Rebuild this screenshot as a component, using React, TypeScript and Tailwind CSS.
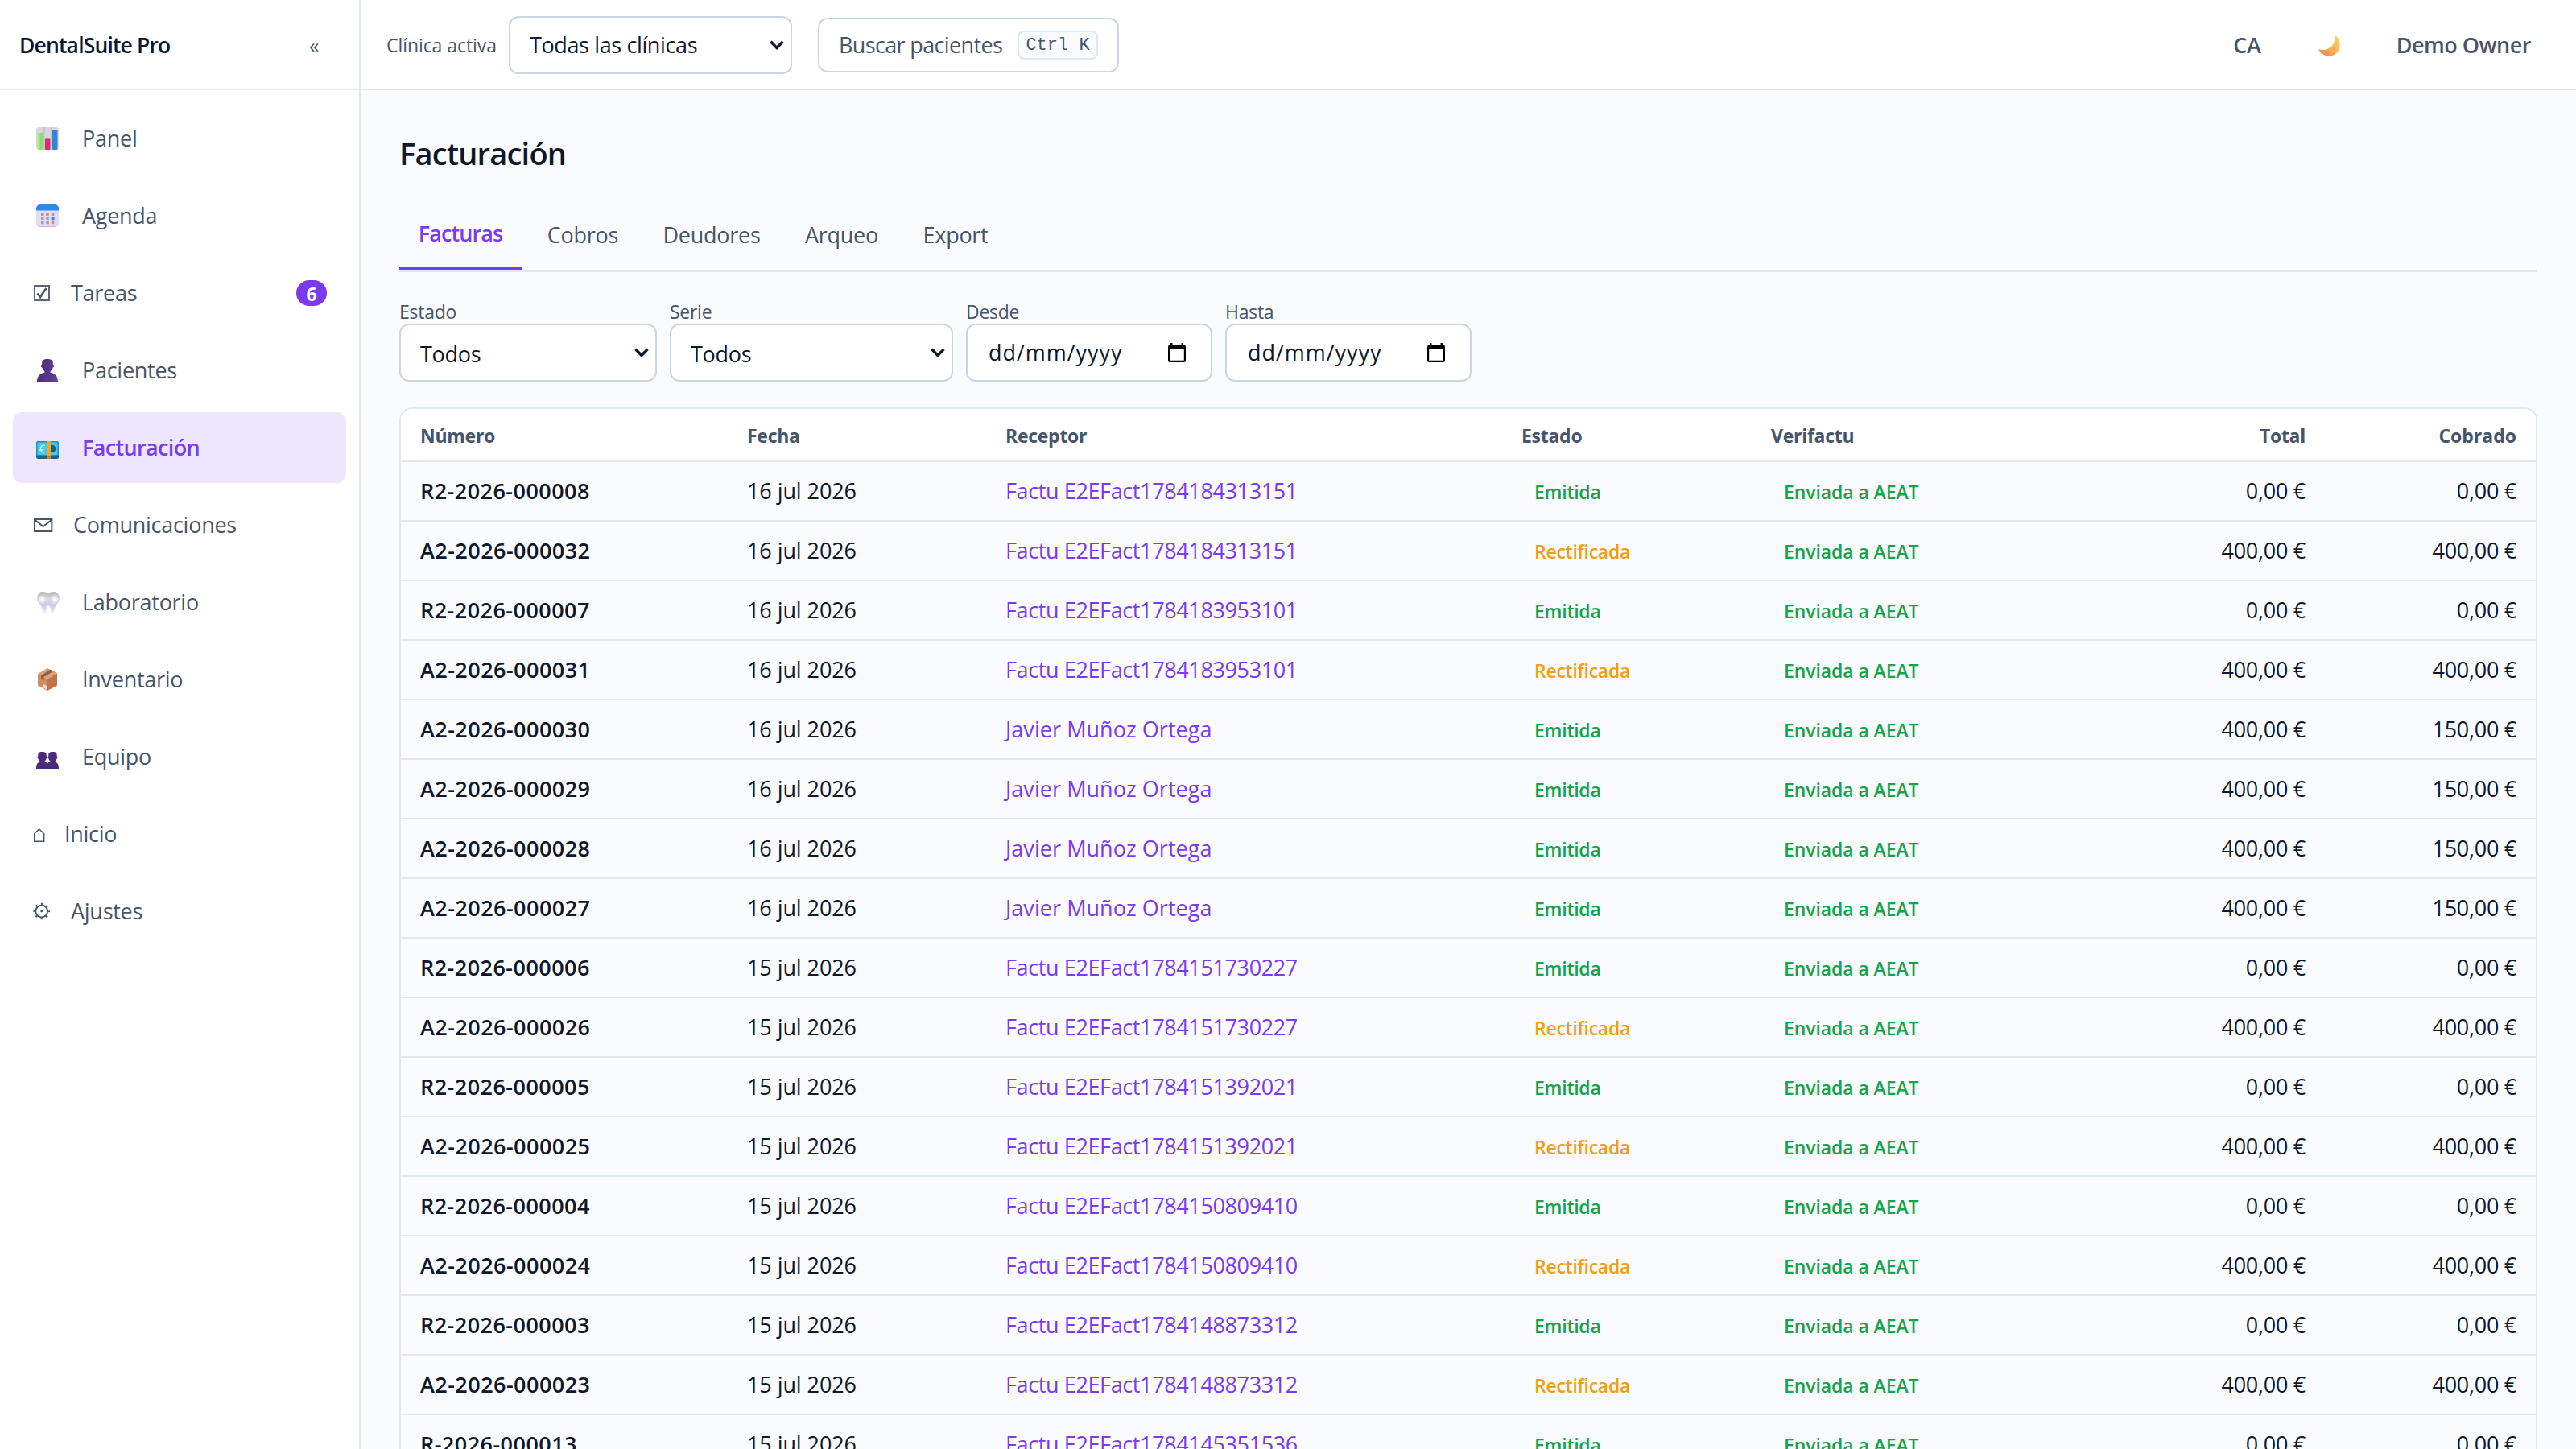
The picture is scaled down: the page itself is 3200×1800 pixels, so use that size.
import React from 'react';

interface NavItem {
  label: string;
  icon: React.ReactNode;
  badge?: number;
  active?: boolean;
}

interface Invoice {
  numero: string;
  fecha: string;
  receptor: string;
  rectificada?: boolean;
  total: string;
  cobrado: string;
}

const ChartIcon = () => (
  <svg viewBox="0 0 28 28" className="w-7 h-7">
    <rect width="28" height="28" rx="4" fill="#d9d3de" />
    <path d="M0 8.500h28M0 18.500h28M10 0v28M19 0v28" stroke="#b9b2c2" strokeWidth="1" />
    <rect x="2" y="7" width="7" height="21" rx="1" fill="#86e06c" />
    <rect x="2" y="7" width="2.500" height="21" rx="1" fill="#a9f07d" />
    <rect x="11" y="14.500" width="6.500" height="13.500" rx="1" fill="#d92a6b" />
    <rect x="20" y="3" width="6.500" height="25" rx="1" fill="#2f86d3" />
  </svg>
);

const CalendarIcon = () => (
  <svg viewBox="0 0 28 28" className="w-7 h-7">
    <rect y="1" width="28" height="27" rx="5" fill="#d3b0ee" />
    <rect y="1" width="28" height="26" rx="5" fill="#e6dcf0" />
    <path d="M0 7.500V5a5 5 0 0 1 5-5h18a5 5 0 0 1 5 5v2.500z" fill="#2b8af0" />
    <g fill="#a59ab0">
      <path d="M6 10.500h3.500V14H6zM12.300 10.500h3.500V14h-3.500zM18.800 10.500h3.500V14h-3.500z" />
      <path d="M6 15.500h3.500V19H6zM12.300 15.500h3.500V19h-3.500z" />
      <path d="M6 21h3.500v3.200H6zM12.300 21h3.500v3.200h-3.500zM18.800 21h3.500v3.200h-3.500z" />
    </g>
    <path d="M18.600 15.300h4v4h-4z" fill="#2b8af0" />
  </svg>
);

const PersonIcon = () => (
  <svg viewBox="0 0 28 28" className="w-7 h-7">
    <defs>
      <linearGradient id="person" x1="0" y1="0" x2="1" y2="0.3">
        <stop offset="0" stopColor="#46276f" />
        <stop offset="1" stopColor="#5f3f99" />
      </linearGradient>
    </defs>
    <path
      d="M14 0c4.200 0 6.600 1 6.800 4.500v2.300c1.500 0 1.600 3.700-.2 4-.6 2.200-1.600 3.300-3 4.400v1.600c5 .8 9 3.600 9.400 11.200H1c.4-7.600 4.500-10.400 9.400-11.200v-1.600c-1.400-1.100-2.400-2.200-3-4.400-1.800-.3-1.700-4-.2-4V4.500C7.400 1 9.800 0 14 0z"
      fill="url(#person)"
    />
  </svg>
);

const MoneyIcon = () => (
  <svg viewBox="0 0 28 22" className="w-7 h-[22px] relative top-[3px]">
    <rect y="3" width="28" height="19" rx="2.500" fill="#1a6587" />
    <rect width="28" height="18.500" rx="2" fill="#1e8fb5" />
    <rect x="1.500" y="1.500" width="25" height="15.500" rx="1" fill="#45c8ee" />
    <circle cx="19.500" cy="9.500" r="4.800" fill="#175f82" />
    <path d="M11 5.500c-3.200-1.200-5.500.8-5.500 4s2.300 5.300 5.500 4M4 8.300h6M4 10.800h5.500" fill="none" stroke="#d9f7ff" strokeWidth="1.300" />
    <path d="M13.200 0h4.800v22h-4.800z" fill="#f6a81c" />
    <path d="M13.200 18h4.800v4h-4.800z" fill="#d98014" />
  </svg>
);

const ToothIcon = () => (
  <svg viewBox="0 0 28 22" preserveAspectRatio="none" className="w-7 h-[26px] relative top-px left-px">
    <defs>
      <linearGradient id="tooth" x1="0" y1="0" x2="0" y2="1">
        <stop offset="0" stopColor="#b9b6bc" />
        <stop offset="0.300" stopColor="#dad8dc" />
        <stop offset="0.600" stopColor="#d6c6ea" />
        <stop offset="1" stopColor="#f1e9f8" />
      </linearGradient>
      <radialGradient id="shine">
        <stop offset="0" stopColor="#fff" />
        <stop offset="1" stopColor="#fff" stopOpacity="0" />
      </radialGradient>
    </defs>
    <path
      d="M0 6C0 2 3 0 7 0c3 0 4.500 1 7 1s4-1 7-1c4 0 7 2 7 6 0 4-2.500 5.500-4.500 7.200-1 1.700-1.500 7-4.500 8.300-2-.5-2-5-3.500-7.200-.6-.8-2-.8-2.600 0C11.500 16 12 20.500 9.500 21.800 6.500 20.500 6 15.500 4.500 13 2.500 11.200 0 10 0 6z"
      fill="url(#tooth)"
    />
    <circle cx="22" cy="7" r="5.500" fill="url(#shine)" />
    <circle cx="6.500" cy="7" r="5.500" fill="url(#shine)" />
  </svg>
);

const BoxIcon = () => (
  <svg viewBox="0 0 28 28" className="w-7 h-7">
    <path d="M14 0l12 6-12 7.500L2 7z" fill="#dba070" />
    <path d="M2 7l12 6.500V28L2 21.500z" fill="#d08d5c" />
    <path d="M26 6v15.500L14 28V13.500z" fill="#bd7547" />
    <path d="M17.500 1.800l4 2L9.500 11v4.500l-3.500-2V9.200z" fill="#8d5f42" />
    <path d="M9 20l4 2v4.500l-4-2.200z" fill="#ecdcd2" />
  </svg>
);

const TeamIcon = () => (
  <svg viewBox="0 0 28 21" className="w-7 h-[21px] relative top-1">
    <path
      d="M7.500 0c4 0 5.200 1.200 5.200 4v1.500c1.200.2 1 2.700-.2 3-.5 1.800-1.300 2.700-2 3.300v1c2 .4 3 .8 3.500 1.300.5-.5 1.500-.9 3.500-1.300v-1c-.7-.6-1.500-1.500-2-3.300-1.200-.3-1.400-2.800-.2-3V4c0-2.800 1.200-4 5.200-4s5.200 1.200 5.200 4v1.500c1.200.2 1 2.700-.2 3-.5 1.800-1.300 2.700-2 3.300v1c3 .5 4.500 2.500 4.500 8.200H0c0-5.700 1.500-7.700 4.500-8.200v-1c-.7-.6-1.500-1.500-2-3.300-1.200-.3-1.400-2.800-.2-3V4c0-2.800 1.200-4 5.200-4z"
      fill="#4b2a7b"
    />
  </svg>
);

const CheckIcon = () => (
  <svg viewBox="0 0 24 24" className="w-6 h-6">
    <rect x="3" y="3" width="18" height="18" fill="none" stroke="#475569" strokeWidth="1.800" />
    <path d="M6.500 12.500l3.500 4.500L17.500 6" fill="none" stroke="#475569" strokeWidth="2.600" />
  </svg>
);

const MailIcon = () => (
  <svg viewBox="0 0 27 24" className="w-[27px] h-6">
    <path d="M3 5h21.400v15H3zM3 5.500l10.700 8.500L24.400 5.500" fill="none" stroke="#475569" strokeWidth="2" />
  </svg>
);

const HomeIcon = () => (
  <svg viewBox="0 0 16 24" className="w-4 h-6">
    <path d="M2.700 21.300V11.500l6-5.500 6 5.500v9.800z" fill="none" stroke="#475569" strokeWidth="1.400" />
  </svg>
);

const GearIcon = () => (
  <svg viewBox="0 0 24 24" className="w-6 h-6">
    <g fill="none" stroke="#475569">
      <circle cx="11.700" cy="12" r="7.400" strokeWidth="1.900" />
      <circle cx="11.700" cy="12" r="9.200" strokeWidth="2.200" strokeDasharray="2.200 5.025" strokeDashoffset="1.100" />
    </g>
    <circle cx="11.700" cy="12" r="1.400" fill="#475569" />
  </svg>
);

const MoonIcon = () => (
  <svg viewBox="0 0 27 26" className="w-[27px] h-[26px]">
    <defs>
      <linearGradient id="moon" x1="1" y1="0" x2="0.400" y2="1">
        <stop offset="0" stopColor="#fbcf62" />
        <stop offset="0.600" stopColor="#f9bd5a" />
        <stop offset="1" stopColor="#ee8f4c" />
      </linearGradient>
    </defs>
    <path d="M20.500 0c4 2.500 6.500 7 6.300 12C26.500 20 20.500 25.800 12.500 25.500 7 25.300 2.500 22 0 17c7 2.500 13 .5 17.200-4.500C20 9 21 4.500 20.500 0z" fill="url(#moon)" />
    <circle cx="19.500" cy="16" r="2" fill="#efa84e" />
    <circle cx="12" cy="20.500" r="1.500" fill="#efa04e" />
  </svg>
);

const Chevron = () => (
  <svg viewBox="0 0 18 12" className="w-[18px] h-3 shrink-0">
    <path d="M1.500 1.800L9 9.500l7.500-7.700" fill="none" stroke="#0f172a" strokeWidth="3.400" />
  </svg>
);

const DateIcon = () => (
  <svg viewBox="0 0 22 24" className="w-[22px] h-6 shrink-0">
    <path d="M3 0h2.500v2.500h11V0H19v2.500h.5A2.500 2.500 0 0 1 22 5v16.500a2.500 2.500 0 0 1-2.500 2.500h-17A2.500 2.500 0 0 1 0 21.500V5a2.500 2.500 0 0 1 2.500-2.500H3zM2.200 7.800v13.900h17.600V7.800z" fill="#000" />
  </svg>
);

const navItems: NavItem[] = [
  { label: 'Panel', icon: <ChartIcon /> },
  { label: 'Agenda', icon: <CalendarIcon /> },
  { label: 'Tareas', icon: <CheckIcon />, badge: 6 },
  { label: 'Pacientes', icon: <PersonIcon /> },
  { label: 'Facturación', icon: <MoneyIcon />, active: true },
  { label: 'Comunicaciones', icon: <MailIcon /> },
  { label: 'Laboratorio', icon: <ToothIcon /> },
  { label: 'Inventario', icon: <BoxIcon /> },
  { label: 'Equipo', icon: <TeamIcon /> },
  { label: 'Inicio', icon: <HomeIcon /> },
  { label: 'Ajustes', icon: <GearIcon /> },
];

// The plain glyph icons sit at the item's edge, the emoji ones are boxed wider
const glyphItems = ['Tareas', 'Comunicaciones', 'Inicio', 'Ajustes'];

const tabs = [
  { label: 'Facturas', width: 'w-[152px]' },
  { label: 'Cobros', width: 'w-[136px]' },
  { label: 'Deudores', width: 'w-[168px]' },
  { label: 'Arqueo', width: 'w-[139px]' },
  { label: 'Export', width: 'w-[128px]' },
];

const invoices: Invoice[] = [
  { numero: 'R2-2026-000008', fecha: '16 jul 2026', receptor: 'Factu E2EFact1784184313151', total: '0,00 €', cobrado: '0,00 €' },
  { numero: 'A2-2026-000032', fecha: '16 jul 2026', receptor: 'Factu E2EFact1784184313151', rectificada: true, total: '400,00 €', cobrado: '400,00 €' },
  { numero: 'R2-2026-000007', fecha: '16 jul 2026', receptor: 'Factu E2EFact1784183953101', total: '0,00 €', cobrado: '0,00 €' },
  { numero: 'A2-2026-000031', fecha: '16 jul 2026', receptor: 'Factu E2EFact1784183953101', rectificada: true, total: '400,00 €', cobrado: '400,00 €' },
  { numero: 'A2-2026-000030', fecha: '16 jul 2026', receptor: 'Javier Muñoz Ortega', total: '400,00 €', cobrado: '150,00 €' },
  { numero: 'A2-2026-000029', fecha: '16 jul 2026', receptor: 'Javier Muñoz Ortega', total: '400,00 €', cobrado: '150,00 €' },
  { numero: 'A2-2026-000028', fecha: '16 jul 2026', receptor: 'Javier Muñoz Ortega', total: '400,00 €', cobrado: '150,00 €' },
  { numero: 'A2-2026-000027', fecha: '16 jul 2026', receptor: 'Javier Muñoz Ortega', total: '400,00 €', cobrado: '150,00 €' },
  { numero: 'R2-2026-000006', fecha: '15 jul 2026', receptor: 'Factu E2EFact1784151730227', total: '0,00 €', cobrado: '0,00 €' },
  { numero: 'A2-2026-000026', fecha: '15 jul 2026', receptor: 'Factu E2EFact1784151730227', rectificada: true, total: '400,00 €', cobrado: '400,00 €' },
  { numero: 'R2-2026-000005', fecha: '15 jul 2026', receptor: 'Factu E2EFact1784151392021', total: '0,00 €', cobrado: '0,00 €' },
  { numero: 'A2-2026-000025', fecha: '15 jul 2026', receptor: 'Factu E2EFact1784151392021', rectificada: true, total: '400,00 €', cobrado: '400,00 €' },
  { numero: 'R2-2026-000004', fecha: '15 jul 2026', receptor: 'Factu E2EFact1784150809410', total: '0,00 €', cobrado: '0,00 €' },
  { numero: 'A2-2026-000024', fecha: '15 jul 2026', receptor: 'Factu E2EFact1784150809410', rectificada: true, total: '400,00 €', cobrado: '400,00 €' },
  { numero: 'R2-2026-000003', fecha: '15 jul 2026', receptor: 'Factu E2EFact1784148873312', total: '0,00 €', cobrado: '0,00 €' },
  { numero: 'A2-2026-000023', fecha: '15 jul 2026', receptor: 'Factu E2EFact1784148873312', rectificada: true, total: '400,00 €', cobrado: '400,00 €' },
  { numero: 'R-2026-000013', fecha: '15 jul 2026', receptor: 'Factu E2EFact1784145351536', total: '0,00 €', cobrado: '0,00 €' },
];

const Sidebar: React.FC = () => (
  <aside className="w-[448px] shrink-0 bg-white border-r-2 border-[#e2e8f0]">
    <div className="h-28 border-b-2 border-[#e2e8f0] flex items-center justify-between pl-6 pr-[50px]">
      <span className="pt-px text-[26.5px] font-semibold text-[#0f172a] tracking-[-0.032em]">DentalSuite Pro</span>
      <span className="pt-0.5 text-[25px] text-[#475569]">«</span>
    </div>
    <nav className="p-4 flex flex-col gap-2">
      {navItems.map(item => (
        <a
          key={item.label}
          className={`h-[88px] w-[414px] px-6 flex items-center gap-6 rounded-xl ${
            item.active ? 'bg-[#eee6fe] text-[#7c3aed] font-semibold tracking-[-0.024em]' : 'text-[#475569]'
          }`}
        >
          <span className={`shrink-0 flex ${glyphItems.includes(item.label) ? '' : 'w-[38px] pl-[5px]'}`}>{item.icon}</span>
          <span className="flex-1">{item.label}</span>
          {item.badge && (
            <span className="w-[38px] h-8 rounded-full bg-[#7c3aed] text-white text-[23px] font-bold flex items-center justify-center pt-0.5">
              {item.badge}
            </span>
          )}
        </a>
      ))}
    </nav>
  </aside>
);

const TopBar: React.FC = () => (
  <header className="h-28 shrink-0 bg-white border-b-2 border-[#e2e8f0] flex items-center pl-8">
    <span className="w-[136px] pt-0.5 text-[23px] text-[#475569] tracking-[-0.003em]">Clínica activa</span>
    <div className="ml-4 w-[352px] h-[72px] rounded-xl border-2 border-[#cbd5e1] flex items-center justify-between pl-6 pr-2 text-[#0f172a] tracking-[-0.014em] mt-0.5">
      <span>Todas las clínicas</span>
      <Chevron />
    </div>
    <div className="ml-8 w-[374px] h-[68px] mt-0.5 rounded-xl border-2 border-[#cbd5e1] flex items-center justify-between px-6 text-[#475569] tracking-[-0.024em]">
      <span>Buscar pacientes</span>
      <kbd className="w-[100px] h-9 pt-0.5 rounded-lg border-2 border-[#e2e8f0] bg-[#fafbfd] flex items-center justify-center whitespace-pre font-['Liberation_Mono',monospace] text-[22px] tracking-normal">
        Ctrl K
      </kbd>
    </div>
    <div className="ml-auto flex items-center pr-14 pt-0.5 text-[#475569] font-semibold">
      <span>CA</span>
      <span className="ml-[71px] mt-0.5"><MoonIcon /></span>
      <span className="ml-[70px] tracking-[-0.018em]">Demo Owner</span>
    </div>
  </header>
);

const SelectField = ({ label, width }: { label: string; width: string }) => (
  <label className={`flex flex-col ${width}`}>
    <span className="h-8 leading-[34px] text-[23px] text-[#475569]">{label}</span>
    <span className="h-[72px] rounded-xl border-2 border-[#cbd5e1] bg-white flex items-center justify-between pl-6 pr-2 text-[#0f172a]">
      <span className="pt-[3px]">Todos</span>
      <Chevron />
    </span>
  </label>
);

const DateField = ({ label }: { label: string }) => (
  <label className="flex flex-col w-[306px]">
    <span className="h-8 leading-[34px] text-[23px] text-[#475569]">{label}</span>
    <span className="h-[72px] rounded-xl border-2 border-[#cbd5e1] bg-white flex items-center justify-between pl-[26px] pr-[31px] text-[#0f172a]">
      <span className="tracking-[0.035em]">dd/mm/yyyy</span>
      <DateIcon />
    </span>
  </label>
);

const InvoiceTable: React.FC = () => (
  <div className="mt-8 rounded-t-2xl border-2 border-b-0 border-[#e2e8f0] overflow-hidden">
    <table className="w-full table-fixed border-separate border-spacing-0">
      <colgroup>
        <col className="w-[406px]" />
        <col className="w-[321px]" />
        <col className="w-[641px]" />
        <col className="w-[310px]" />
        <col className="w-[450px]" />
        <col className="w-[262px]" />
        <col className="w-[262px]" />
      </colgroup>
      <thead>
        <tr className="h-[66px] bg-white text-left text-[23px] text-[#475569] *:border-b-2 *:border-[#e2e8f0] *:px-6 *:pt-0.5 *:pb-0 *:font-bold">
          <th>Número</th>
          <th>Fecha</th>
          <th>Receptor</th>
          <th>Estado</th>
          <th>Verifactu</th>
          <th className="text-right">Total</th>
          <th className="text-right tracking-normal">Cobrado</th>
        </tr>
      </thead>
      <tbody>
        {invoices.map(inv => (
          <tr key={inv.numero} className="h-[74px] text-[#0f172a] *:border-b-2 *:border-[#e2e8f0] *:px-6 *:py-0">
            <td className="font-semibold tracking-[0.017em]">{inv.numero}</td>
            <td className="tracking-[-0.003em]">{inv.fecha}</td>
            <td className={`text-[#7c3aed] ${inv.receptor.startsWith('Factu') ? 'tracking-[-0.014em]' : 'tracking-[0.002em]'}`}>
              {inv.receptor}
            </td>
            <td>
              <span className={`px-4 text-[23px] font-semibold ${inv.rectificada ? 'text-[#f59e0b]' : 'text-[#16a34a]'}`}>
                {inv.rectificada ? 'Rectificada' : 'Emitida'}
              </span>
            </td>
            <td>
              <span className="px-4 text-[23px] font-semibold text-[#16a34a] tracking-[-0.004em]">Enviada a AEAT</span>
            </td>
            <td className="text-right">{inv.total}</td>
            <td className="text-right">{inv.cobrado}</td>
          </tr>
        ))}
      </tbody>
    </table>
  </div>
);

const App: React.FC = () => {
  return (
    <div className="w-[3200px] h-[1800px] overflow-hidden flex bg-[#fafbfd] font-['Open_Sans',sans-serif] text-[27px] leading-[36px] tracking-[-0.01em] whitespace-nowrap">
      <Sidebar />
      <div className="flex-1 flex flex-col">
        <TopBar />
        <main className="flex-1 px-12 pt-12">
          <h1 className="h-[60px] leading-[60px] text-[38px] font-semibold text-[#0f172a] tracking-[-0.02em]">Facturación</h1>
          <div className="mt-8 h-[86px] flex gap-2 border-b-2 border-[#e2e8f0]">
            {tabs.map((tab, i) => (
              <span
                key={tab.label}
                className={`${tab.width} h-[84px] pb-1 flex items-center justify-center ${
                  i === 0 ? 'border-b-4 border-[#7c3aed] text-[#7c3aed] font-semibold tracking-[-0.034em]' : 'text-[#475569]'
                }`}
              >
                {tab.label}
              </span>
            ))}
          </div>
          <div className="mt-8 flex gap-4">
            <SelectField label="Estado" width="w-[320px]" />
            <SelectField label="Serie" width="w-[352px]" />
            <DateField label="Desde" />
            <DateField label="Hasta" />
          </div>
          <InvoiceTable />
        </main>
      </div>
    </div>
  );
};

export default App;
